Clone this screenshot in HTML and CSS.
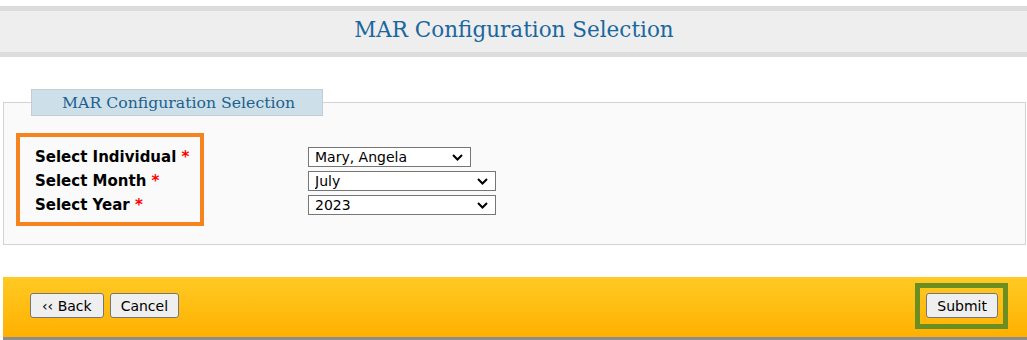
FILE: index.html
```html
<!DOCTYPE html>
<html lang="en">
<head>
<meta charset="utf-8">
<title>MAR Configuration Selection</title>
<link rel="stylesheet" href="styles.css">
</head>
<body>
<header class="page-header">
  <h1 class="page-title">MAR Configuration Selection</h1>
</header>

<fieldset class="panel">
  <legend class="panel-legend">MAR Configuration Selection</legend>
  <div class="form-area">
    <div class="label-box">
      <div class="field-label">Select Individual <span class="req">*</span></div>
      <div class="field-label">Select Month <span class="req">*</span></div>
      <div class="field-label">Select Year <span class="req">*</span></div>
    </div>
    <div class="select-col">
      <div class="select-wrap sel-short">
        <select class="field-select">
          <option>Mary, Angela</option>
        </select>
        <svg class="chev" viewBox="0 0 11 7" aria-hidden="true"><polyline points="1,1 5.5,5.5 10,1"/></svg>
      </div>
      <div class="select-wrap sel-long">
        <select class="field-select">
          <option>July</option>
        </select>
        <svg class="chev" viewBox="0 0 11 7" aria-hidden="true"><polyline points="1,1 5.5,5.5 10,1"/></svg>
      </div>
      <div class="select-wrap sel-long">
        <select class="field-select">
          <option>2023</option>
        </select>
        <svg class="chev" viewBox="0 0 11 7" aria-hidden="true"><polyline points="1,1 5.5,5.5 10,1"/></svg>
      </div>
    </div>
  </div>
</fieldset>

<footer class="action-bar">
  <div class="left-actions">
    <button class="btn btn-back" type="button">&lsaquo;&lsaquo; Back</button>
    <button class="btn" type="button">Cancel</button>
  </div>
  <div class="submit-box">
    <button class="btn" type="submit">Submit</button>
  </div>
</footer>
</body>
</html>
```

FILE: styles.css
```css
html, body {
  margin: 0;
  padding: 0;
  background: #ffffff;
}

body {
  font-family: "DejaVu Sans", Verdana, sans-serif;
  color: #000;
}

.page-header {
  margin-top: 6px;
  height: 41px;
  background: #eeeeee;
  border-top: 5px solid #dcdcdc;
  border-bottom: 5px solid #dcdcdc;
  display: flex;
  align-items: center;
  justify-content: center;
}

.page-title {
  margin: 0 0 3px 0;
  font-family: "DejaVu Serif", Georgia, serif;
  font-weight: normal;
  font-size: 21.5px;
  line-height: 36px;
  color: #1a679e;
  padding-left: 1px;
}

.panel {
  margin: 32px 1px 0 3px;
  padding: 0 0 18px 0;
  border: 1px solid #d3d3d3;
  background: #fafafa;
  min-width: 0;
}

.panel-legend {
  margin-left: 27px;
  padding: 0 27px 0 30px;
  background: #cddfe9;
  border: 1px solid #c3cdd3;
  font-family: "DejaVu Serif", Georgia, serif;
  font-size: 15.7px;
  line-height: 25px;
  color: #1d5f8e;
}

.form-area {
  display: flex;
  align-items: flex-start;
  margin: 17px 0 0 12px;
}

.label-box {
  border: 4px solid #f5841f;
  padding: 8px 0 5px 15px;
  box-sizing: content-box;
  width: 165px;
}

.field-label {
  font-weight: bold;
  font-size: 15px;
  line-height: 24px;
  white-space: nowrap;
}

.req {
  color: #ff0000;
}

.select-col {
  display: flex;
  flex-direction: column;
  gap: 4px;
  margin: 14px 0 0 104px;
}

.select-wrap {
  position: relative;
  height: 20px;
}

.field-select {
  -webkit-appearance: none;
  appearance: none;
  display: block;
  width: 100%;
  height: 20px;
  box-sizing: border-box;
  font-family: "DejaVu Sans", Verdana, sans-serif;
  font-size: 14px;
  line-height: 18px;
  color: #000;
  background-color: #fff;
  border: 1px solid #767676;
  border-radius: 0;
  padding: 0 24px 0 6px;
  margin: 0;
}

.chev {
  position: absolute;
  right: 8px;
  top: 7px;
  width: 11px;
  height: 7px;
  pointer-events: none;
  fill: none;
  stroke: #000;
  stroke-width: 2;
}

.sel-short {
  width: 163px;
}

.sel-long {
  width: 188px;
}

.action-bar {
  margin: 32px 0 0 3px;
  height: 46px;
  padding: 6px 19px 8px 27px;
  background: linear-gradient(to bottom, #ffca24 0%, #ffb000 100%);
  border-bottom: 3px solid #8c8c8c;
  display: flex;
  align-items: center;
  justify-content: space-between;
}

.left-actions {
  display: flex;
  gap: 6px;
  margin-top: -1px;
}

.btn {
  height: 25px;
  box-sizing: border-box;
  padding: 0 10px;
  font-family: "DejaVu Sans", Verdana, sans-serif;
  font-size: 14px;
  color: #000;
  background: #efefef;
  border: 1px solid #767676;
  border-radius: 3px;
  margin: 0;
}

.btn-back {
  padding: 0 11px;
}

.submit-box {
  border: 5px solid #6b8e23;
  padding: 5px 5px 6px 6px;
  display: flex;
}
```
